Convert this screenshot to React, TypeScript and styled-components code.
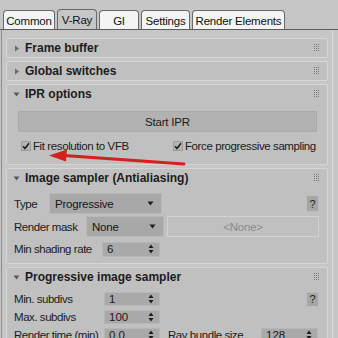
import React from "react";
import styled, { createGlobalStyle } from "styled-components";

const GlobalStyle = createGlobalStyle`
  html, body {
    margin: 0;
    padding: 0;
  }
  body {
    width: 338px;
    height: 338px;
    overflow: hidden;
    background: #c6c6c6;
    font-family: "Liberation Sans", Arial, sans-serif;
    font-size: 11px;
    color: #1b1b1b;
  }
`;

const Page = styled.div`
  position: relative;
  width: 338px;
  height: 338px;
  overflow: hidden;
  display: flex;
  flex-direction: column;
`;

const TabBar = styled.div`
  flex: none;
  display: flex;
  align-items: flex-end;
  gap: 2px;
  height: 30px;
  box-sizing: border-box;
  padding-left: 3px;
  border-bottom: 1px solid #5c5c5c;
`;

const Tab = styled.div<{ $w: number; $active?: boolean }>`
  width: ${(p) => p.$w}px;
  height: ${(p) => (p.$active ? 20 : 19)}px;
  box-sizing: border-box;
  display: flex;
  align-items: center;
  justify-content: center;
  border: 1px solid #6a6a6a;
  border-bottom: none;
  border-radius: 4px 4px 0 0;
  background: ${(p) => (p.$active ? "#c6c6c6" : "#f4f4f4")};
  font-size: 11.5px;
  letter-spacing: -0.2px;
  color: #111;
  padding-top: 1px;
`;

const Content = styled.div`
  flex: 1;
  min-height: 0;
  overflow: hidden;
  width: 332px;
  margin-left: 1px;
  box-sizing: border-box;
  border-left: 1px solid #8e8e8e;
  border-right: 1px solid #dcdcdc;
  padding: 8px 4px 0 4px;
  display: flex;
  flex-direction: column;
  gap: 3px;
`;

const Rollout = styled.div`
  flex: none;
  border: 1px solid #d6d6d6;
  border-radius: 2px;
  background: #c0c0c0;
  display: flex;
  flex-direction: column;
`;

const Header = styled.div`
  height: 18px;
  display: flex;
  align-items: center;
  padding-left: 6px;
  padding-right: 7px;
  font-weight: bold;
  font-size: 12px;
  color: #1c1c1c;
`;

const Caret = styled.span`
  width: 12px;
  display: flex;
  align-items: center;
`;

const HeaderTitle = styled.span`
  flex: 1;
`;

const Body = styled.div<{ $pad: string; $gap: number }>`
  padding: ${(p) => p.$pad};
  display: flex;
  flex-direction: column;
  gap: ${(p) => p.$gap}px;
`;

const WideButton = styled.div`
  height: 21px;
  box-sizing: border-box;
  border: 1px solid #a9a9a9;
  border-radius: 2px;
  background: #b2b2b2;
  display: flex;
  align-items: center;
  justify-content: center;
  font-size: 11.5px;
  letter-spacing: -0.2px;
  color: #1a1a1a;
`;

const CheckRow = styled.div`
  display: grid;
  grid-template-columns: 152px 1fr;
  padding-left: 3px;
  height: 12px;
  align-items: center;
`;

const CheckItem = styled.label`
  display: flex;
  align-items: center;
  gap: 2px;
  font-size: 11.5px;
  letter-spacing: -0.4px;
  white-space: nowrap;
`;

const Box = styled.span`
  width: 10px;
  height: 10px;
  box-sizing: border-box;
  border: 1px solid #9b9b9b;
  background: #b4b4b4;
  display: flex;
  align-items: center;
  justify-content: center;
`;

const Row = styled.div<{ $h: number }>`
  height: ${(p) => p.$h}px;
  display: flex;
  align-items: center;
`;

const Label = styled.span<{ $w: number; $ml?: number }>`
  width: ${(p) => p.$w}px;
  margin-left: ${(p) => p.$ml ?? 0}px;
  flex: none;
  font-size: 11.5px;
  letter-spacing: -0.45px;
  white-space: nowrap;
  overflow: hidden;
`;

const Dropdown = styled.div<{ $w: number; $h: number }>`
  width: ${(p) => p.$w}px;
  height: ${(p) => p.$h}px;
  box-sizing: border-box;
  border: 1px solid #b8b8b8;
  background: #a8a8a8;
  display: flex;
  align-items: center;
  padding: 0 7px 0 5px;
  font-size: 11.5px;
  letter-spacing: -0.2px;
  color: #151515;
`;

const Grow = styled.span`
  flex: 1;
`;

const Spinner = styled.div<{ $w: number; $h: number }>`
  width: ${(p) => p.$w}px;
  height: ${(p) => p.$h}px;
  box-sizing: border-box;
  border: 1px solid #b6b6b6;
  background: #a9a9a9;
  display: flex;
  align-items: center;
  padding: 0 5px 0 4px;
  font-size: 11.5px;
`;

const MapSlot = styled.div`
  width: 152px;
  height: 21px;
  margin-left: 3px;
  box-sizing: border-box;
  border: 1px solid #d2d2d2;
  display: flex;
  align-items: center;
  justify-content: center;
  color: #8b8b8b;
  font-size: 11.5px;
  letter-spacing: -0.2px;
`;

const Help = styled.div<{ $h: number }>`
  margin-left: auto;
  width: 13px;
  height: ${(p) => p.$h}px;
  box-sizing: border-box;
  border: 1px solid #bdbdbd;
  background: #a6a6a6;
  display: flex;
  align-items: center;
  justify-content: center;
  font-size: 11px;
  color: #222;
`;

const Overlay = styled.svg`
  position: absolute;
  left: 0;
  top: 0;
  pointer-events: none;
`;

const Triangle = ({ open }: { open?: boolean }) => (
  <svg width="7" height="7" viewBox="0 0 7 7">
    {open ? (
      <polygon points="0.5,1.5 6.5,1.5 3.5,5.5" fill="#5a5a5a" />
    ) : (
      <polygon points="2,0.5 6,3.5 2,6.5" fill="#6a6a6a" />
    )}
  </svg>
);

const Grip = () => (
  <svg width="6" height="8" viewBox="0 0 6 8">
    {[0, 2, 4, 6].map((y) =>
      [0, 2, 4].map((x) => <rect key={`${x}-${y}`} x={x} y={y} width="1" height="1" fill="#7a7a7a" />)
    )}
  </svg>
);

const Check = () => (
  <svg width="8" height="8" viewBox="0 0 8 8">
    <path d="M1 4.2 L3 6.4 L7 1.2" stroke="#202020" strokeWidth="1.6" fill="none" />
  </svg>
);

const DownArrow = () => (
  <svg width="7" height="5" viewBox="0 0 7 5">
    <polygon points="0.5,0.5 6.5,0.5 3.5,4.5" fill="#1e1e1e" />
  </svg>
);

const SpinArrows = () => (
  <svg width="6" height="10" viewBox="0 0 6 10">
    <polygon points="0.5,4 5.5,4 3,0.5" fill="#1e1e1e" />
    <polygon points="0.5,6 5.5,6 3,9.5" fill="#1e1e1e" />
  </svg>
);

function RolloutHeader({ title, open }: { title: string; open?: boolean }) {
  return (
    <Header>
      <Caret>
        <Triangle open={open} />
      </Caret>
      <HeaderTitle>{title}</HeaderTitle>
      <Grip />
    </Header>
  );
}

function Spin({ value, w, h }: { value: string; w: number; h: number }) {
  return (
    <Spinner $w={w} $h={h}>
      <Grow>{value}</Grow>
      <SpinArrows />
    </Spinner>
  );
}

const tabs = [
  { name: "Common", w: 52 },
  { name: "V-Ray", w: 40, active: true },
  { name: "GI", w: 40 },
  { name: "Settings", w: 49 },
  { name: "Render Elements", w: 93 },
];

export default function App() {
  return (
    <Page>
      <GlobalStyle />
      <TabBar>
        {tabs.map((t) => (
          <Tab key={t.name} $w={t.w} $active={t.active}>
            {t.name}
          </Tab>
        ))}
      </TabBar>
      <Content>
        <Rollout>
          <RolloutHeader title="Frame buffer" />
        </Rollout>
        <Rollout>
          <RolloutHeader title="Global switches" />
        </Rollout>
        <Rollout>
          <RolloutHeader title="IPR options" open />
          <Body $pad="8px 10px 12px 11px" $gap={8}>
            <WideButton>Start IPR</WideButton>
            <CheckRow>
              <CheckItem>
                <Box>
                  <Check />
                </Box>
                Fit resolution to VFB
              </CheckItem>
              <CheckItem>
                <Box>
                  <Check />
                </Box>
                Force progressive sampling
              </CheckItem>
            </CheckRow>
          </Body>
        </Rollout>
        <Rollout>
          <RolloutHeader title="Image sampler (Antialiasing)" open />
          <Body $pad="6px 8px 4px 7px" $gap={2}>
            <Row $h={21}>
              <Label $w={35}>Type</Label>
              <Dropdown $w={113} $h={21}>
                <Grow>Progressive</Grow>
                <DownArrow />
              </Dropdown>
              <Help $h={17}>?</Help>
            </Row>
            <Row $h={21}>
              <Label $w={72}>Render mask</Label>
              <Dropdown $w={78} $h={21}>
                <Grow>None</Grow>
                <DownArrow />
              </Dropdown>
              <MapSlot>&lt;None&gt;</MapSlot>
            </Row>
            <Row $h={20}>
              <Label $w={88}>Min shading rate</Label>
              <Spin value="6" w={58} h={15} />
            </Row>
          </Body>
        </Rollout>
        <Rollout>
          <RolloutHeader title="Progressive image sampler" open />
          <Body $pad="5px 8px 4px 7px" $gap={2}>
            <Row $h={16}>
              <Label $w={90}>Min. subdivs</Label>
              <Spin value="1" w={56} h={14} />
              <Help $h={15}>?</Help>
            </Row>
            <Row $h={16}>
              <Label $w={90}>Max. subdivs</Label>
              <Spin value="100" w={56} h={14} />
            </Row>
            <Row $h={16}>
              <Label $w={90}>Render time (min)</Label>
              <Spin value="0.0" w={56} h={14} />
              <Label $w={93} $ml={8}>
                Ray bundle size
              </Label>
              <Spin value="128" w={57} h={14} />
            </Row>
          </Body>
        </Rollout>
      </Content>
      <Overlay width="338" height="338" viewBox="0 0 338 338">
        <path d="M184 164 L64 155.5" stroke="#d3211d" strokeWidth="3" strokeLinecap="round" fill="none" />
        <polygon points="49,155.5 67,149.5 66,161.5" fill="#d3211d" />
      </Overlay>
    </Page>
  );
}
